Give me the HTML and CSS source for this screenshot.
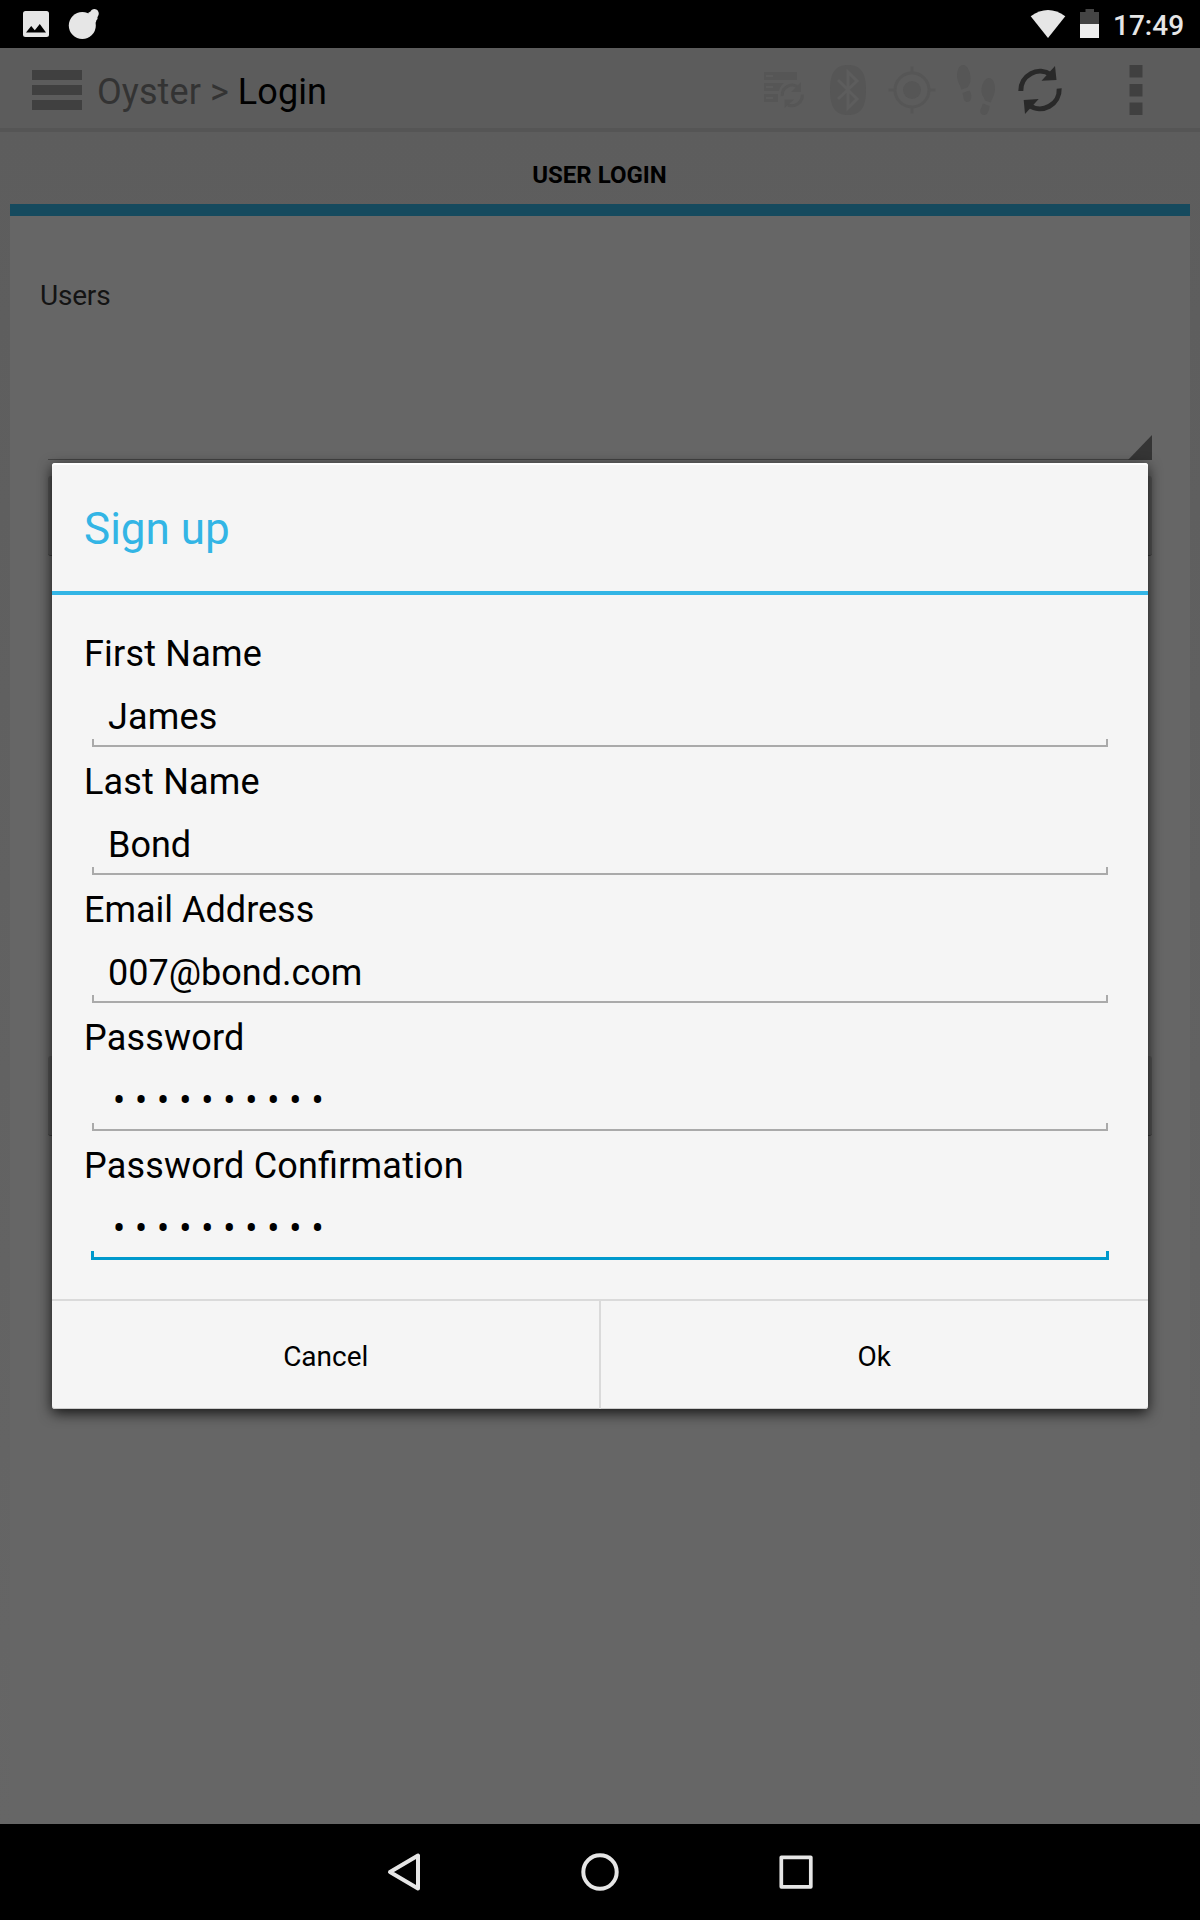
FILE: index.html
```html
<!DOCTYPE html>
<html lang="en">
<head>
<meta charset="utf-8">
<title>Oyster - Login</title>
<link rel="stylesheet" href="styles.css">
</head>
<body>
<div class="screen">
  <div class="status-bar">
    <svg class="status-left" width="110" height="48" viewBox="0 0 110 48">
      <rect x="23" y="11" width="26" height="26" rx="2.5" fill="#e6e6e6"/>
      <path d="M26 32.5L31.2 26l3.6 4.2 5-6.2 6.2 8.5z" fill="#000"/>
      <circle cx="82.3" cy="25.5" r="13.5" fill="#e6e6e6"/>
      <path d="M88 13L90.500 11.500A4.300 4.300 0 1 1 98.300 15.500Q97 17 97.500 19Q96 20 96 22L94 24Z" fill="#e6e6e6"/>
    </svg>
    <div class="status-right">
      <svg width="80" height="48" viewBox="1026 0 80 48">
        <path d="M1048 38L1030.700 16.300Q1048 3.700 1065.300 16.300Z" fill="#e6e6e6"/>
        <path d="M1080 12h5.500V9h8.500v3h5v12h-19z" fill="#444"/>
        <path d="M1080 24h19v14h-19z" fill="#eee"/>
      </svg>
      <span class="clock">17:49</span>
    </div>
  </div>

  <header class="action-bar">
    <div class="burger"><i></i><i></i><i></i></div>
    <h1 class="crumbs">Oyster &gt; <b>Login</b></h1>
    <div class="actions">
      <svg width="64" height="80" viewBox="752 48 64 80" fill="#565656">
        <path fill-rule="evenodd" d="M764 72h33v8h-33zM766 75v2h7v-2zM764 83h20q-4 3-5 8h-15zM766 86v2h7v-2zM764 94h14v8h-14zM766 97v2h7v-2z"/>
        <path d="M782.300 96A9.800 9.800 0 0 1 797 86.500M802.300 94.500A10.500 10.500 0 0 1 788 105" fill="none" stroke="#565656" stroke-width="3"/>
        <path d="M801 82v10h-10zM784.500 108V99.500h9.500z"/>
      </svg>
      <svg width="64" height="80" viewBox="816 48 64 80">
        <path d="M848 65C861 65 866 73 866 90s-5 25-18 25-18-8-18-25 5-25 18-25z" fill="#565656"/>
        <path d="M838 80l19 19-9 9V72l9 9-19 18" fill="none" stroke="#5d5d5d" stroke-width="3"/>
      </svg>
      <svg width="64" height="80" viewBox="880 48 64 80" fill="#565656">
        <circle cx="912" cy="90" r="9"/>
        <circle cx="912" cy="90" r="17" fill="none" stroke="#565656" stroke-width="3"/>
        <path d="M910.500 66.500h3V74h-3zM910.500 106h3v7.500h-3zM888.500 88.500h7v3h-7zM928.500 88.500h7v3h-7z"/>
      </svg>
      <svg width="64" height="80" viewBox="944 48 64 80" fill="#565656">
        <path d="M963 65c5 0 8 8 7.500 15-.5 5-2.500 6-3 7.500l-6 2C960 85 957 81 957 76c0-6 2-11 6-11zM962.500 93l7-2.500c2 3 2.500 7 1 9.500-2 3-5 2.500-6.500 0z"/>
        <path d="M989 78c4 0 6 5 6 11s-3 9-4 13.500l-6-2C984.500 98 982 96 981.500 92c-.5-7 3-14 7.500-14zM983 103.500l6.500 2.500c0 4-2 9-5 9s-5-2-4-5.500z"/>
      </svg>
      <svg width="64" height="80" viewBox="1008 48 64 80">
        <path d="M1020.800 91A19.200 19.200 0 0 1 1051 74.800M1059.200 88.500A19.200 19.200 0 0 1 1029 105.200" fill="none" stroke="#292929" stroke-width="5"/>
        <path d="M1055 66l1.500 14-15 .8zM1025 114l-1.300-14 15-1z" fill="#292929"/>
      </svg>
      <svg width="128" height="80" viewBox="1072 48 128 80">
        <path d="M1129.500 65h13v12.500h-13zM1129.500 84h13v12.500h-13zM1129.500 102.500h13V115h-13z" fill="#404040"/>
      </svg>
    </div>
  </header>

  <main class="page">
    <div class="tab">USER LOGIN</div>
    <section class="panel">
      <div class="users-label">Users</div>
      <div class="spinner"></div>
      <div class="back-button"></div>
      <div class="back-button second"></div>
    </section>
  </main>

  <nav class="nav-bar">
    <svg width="520" height="96" viewBox="340 1824 520 96" fill="none" stroke="#e6e6e6" stroke-width="4" stroke-linejoin="round">
      <path d="M390 1872L418 1855.500V1888.500Z"/>
      <circle cx="600" cy="1872" r="16.700"/>
      <rect x="781.300" y="1857.300" width="29.500" height="29.500" stroke-width="3.700"/>
    </svg>
  </nav>

  <div class="dialog">
    <h2 class="dialog-title">Sign up</h2>
    <div class="form">
      <div class="field"><span class="label wide">First Name</span><div class="value wide">James</div></div>
      <div class="field"><span class="label wide">Last Name</span><div class="value">Bond</div></div>
      <div class="field"><span class="label">Email Address</span><div class="value">007@bond.com</div></div>
      <div class="field"><span class="label wide">Password</span><div class="value secret">••••••••••</div></div>
      <div class="field focused"><span class="label wide">Password Confirmation</span><div class="value secret">••••••••••</div></div>
    </div>
    <div class="buttons">
      <div class="button">Cancel</div>
      <div class="button">Ok</div>
    </div>
  </div>
</div>
</body>
</html>
```

FILE: styles.css
```css
*, *::before, *::after { box-sizing: border-box; }
body { margin: 0; font-family: Roboto, "Liberation Sans", sans-serif; color: #000; }
svg { display: block; flex: none; }

.screen {
  position: relative;
  width: 1200px;
  height: 1920px;
  display: flex;
  flex-direction: column;
  overflow: hidden;
}

.status-bar {
  height: 48px;
  flex: none;
  background: #000;
  display: flex;
  justify-content: space-between;
}
.status-right { display: flex; width: 174px; }
.clock {
  padding-left: 7px;
  color: #e6e6e6;
  font-size: 28px;
  font-weight: 500;
  line-height: 51px;
}

.action-bar {
  height: 84px;
  flex: none;
  display: flex;
  background: #5c5c5c;
  border-bottom: 4px solid #555;
}
.burger {
  width: 50px;
  margin: 22px 0 0 32px;
  display: flex;
  flex-direction: column;
  gap: 5px;
}
.burger i { height: 10px; background: #404040; }
.crumbs {
  flex: 1;
  margin: 0 0 0 15px;
  font-size: 36px;
  font-weight: 400;
  line-height: 88px;
  height: 80px;
  letter-spacing: .08px;
  color: #333;
  white-space: nowrap;
}
.crumbs b { font-weight: 400; color: #000; }
.actions { display: flex; }

.page {
  flex: 1;
  padding: 0 10px;
  background: linear-gradient(#5d5d5d, #666);
}
.tab {
  height: 72px;
  padding-right: 1px;
  font-size: 24px;
  font-weight: 700;
  line-height: 86px;
  text-align: center;
}
.panel {
  height: 1620px;
  padding: 63px 38px 0;
  background: #666;
  border-top: 12px solid #154a5e;
}
.users-label {
  height: 180px;
  margin-left: -8px;
  font-size: 28px;
  line-height: 34px;
  letter-spacing: -.2px;
  color: #141414;
}
.spinner {
  height: 1px;
  margin-bottom: 16px;
  background: #444;
  position: relative;
}
.spinner::after {
  content: "";
  position: absolute;
  right: 0;
  bottom: 0;
  width: 24px;
  height: 25px;
  background: #353535;
  clip-path: polygon(100% 0, 100% 100%, 0 100%);
}
.back-button {
  height: 80px;
  background: #575757;
  border-bottom: 1px solid #3c3c3c;
  border-radius: 3px;
}
.back-button.second { margin-top: 500px; }

.nav-bar {
  height: 96px;
  flex: none;
  background: #000;
  display: flex;
  justify-content: center;
}

/* Modal window floating above the login page */
.dialog {
  position: absolute;
  left: 52px;
  top: 463px;
  width: 1096px;
  height: 946px;
  display: flex;
  flex-direction: column;
  background: #f5f5f5;
  border-radius: 3px;
  box-shadow: 0 4px 14px rgba(0, 0, 0, .8), inset 0 2px 0 #fff, inset 0 -1px 0 #ccc;
}
.dialog-title {
  height: 132px;
  margin: 0;
  padding-left: 32px;
  border-bottom: 4px solid #33b5e5;
  font-size: 44px;
  font-weight: 400;
  line-height: 132px;
  color: #33b5e5;
}
.form {
  flex: 1;
  padding: 38px 32px 0;
  font-size: 36px;
}
.field { height: 128px; }
.label { display: block; line-height: 42px; }
.wide { letter-spacing: .19px; font-feature-settings: "liga" 1; }
.value {
  position: relative;
  height: 72px;
  margin: 0 8px;
  padding-left: 16px;
  line-height: 84px;
}
.secret { padding-left: 21px; letter-spacing: 9.9px; }
.value::after {
  content: "";
  position: absolute;
  left: 0;
  right: 0;
  bottom: 0;
  height: 8px;
  border: 2px solid #aaa;
  border-top: 0;
}
.focused .value::after {
  left: -1px;
  right: -1px;
  bottom: -1px;
  height: 9px;
  border-width: 3px;
  border-top: 0;
  border-color: #0099cc;
}
.buttons {
  display: flex;
  height: 110px;
  border-top: 2px solid #dadada;
}
.button {
  flex: 1;
  font-size: 28px;
  line-height: 112px;
  text-align: center;
}
.button + .button {
  margin-left: -1px;
  border-left: 2px solid #dadada;
}
```
